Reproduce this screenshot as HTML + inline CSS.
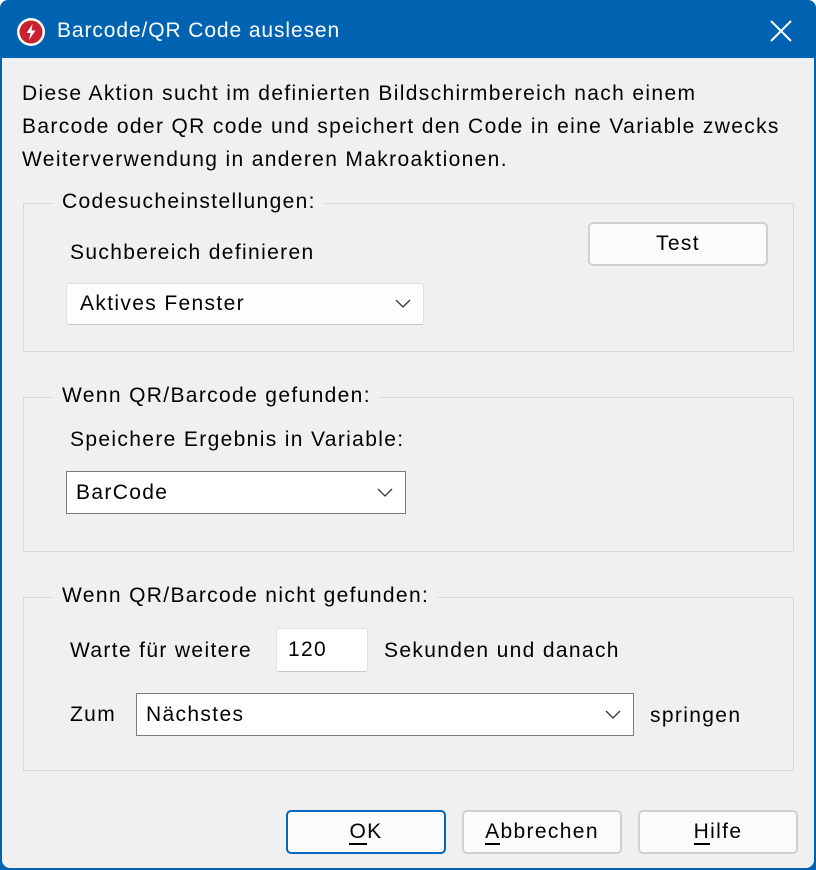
<!DOCTYPE html>
<html><head><meta charset="utf-8"><style>
*{box-sizing:border-box;margin:0;padding:0}
body{width:816px;height:870px;background:#fff;font-family:"Liberation Sans",sans-serif;font-size:21px;letter-spacing:1.35px;color:#000;position:relative;overflow:hidden}
.win{position:absolute;left:0;top:0;width:816px;height:870px;background:#0063b1;border-radius:8px 8px 0 0;}
.client{position:absolute;left:2px;top:58px;width:812px;height:810px;background:#f0f0f0;border-bottom-right-radius:8px;border-bottom-left-radius:8px}
.t{position:absolute;white-space:nowrap}
.grp{position:absolute;border:1px solid #dadada}
.leg{position:absolute;background:#f0f0f0;padding:0 8px;white-space:nowrap}
.combo{position:absolute;background:#fdfdfd;border:1px solid #e0e0e0;border-bottom-color:#c8c8c8;border-radius:3px}
.combo span{position:absolute;left:13px;top:50%;transform:translateY(-50%)}
.combo svg{position:absolute;right:12px;top:50%;margin-top:-5px}
.btn{position:absolute;background:#fbfbfb;border:2px solid #d0d0d0;border-radius:5px;text-align:center}
u{text-decoration:none;border-bottom:2px solid #000}
</style></head><body>
<div class="win">
<svg style="position:absolute;left:16px;top:17px" width="30" height="30" viewBox="0 0 30 30"><circle cx="15" cy="15" r="14" fill="#fff"/><circle cx="15" cy="15" r="11.5" fill="#c8202c"/><path d="M16.5 7 L10.5 16 H14.5 L13 23 L19.5 13.5 H15.5 Z" fill="#fff"/></svg>
<div class="t" style="left:57px;top:19px;color:#fff;font-size:21px;letter-spacing:0.9px">Barcode/QR Code auslesen</div>
<svg style="position:absolute;left:770px;top:20px" width="22" height="22" viewBox="0 0 22 22"><path d="M1 1L21 21M21 1L1 21" stroke="#fff" stroke-width="2"/></svg>
<div class="client"></div>
</div>
<div class="t" style="left:22px;top:77px;line-height:33px">Diese Aktion sucht im definierten Bildschirmbereich nach einem<br>Barcode oder QR code und speichert den Code in eine Variable zwecks<br>Weiterverwendung in anderen Makroaktionen.</div>

<div class="grp" style="left:23px;top:203px;width:771px;height:149px"></div>
<div class="leg" style="left:54px;top:190px">Codesucheinstellungen:</div>
<div class="t" style="left:70px;top:241px">Suchbereich definieren</div>
<div class="combo" style="left:66px;top:283px;width:358px;height:42px"><span>Aktives Fenster</span><svg width="16" height="10"><path d="M1 1l7 7 7-7" stroke="#333" fill="none" stroke-width="1.3"/></svg></div>
<div class="btn" style="left:588px;top:222px;width:180px;height:44px;line-height:40px">Test</div>

<div class="grp" style="left:23px;top:397px;width:771px;height:155px"></div>
<div class="leg" style="left:54px;top:384px">Wenn QR/Barcode gefunden:</div>
<div class="t" style="left:70px;top:428px">Speichere Ergebnis in Variable:</div>
<div class="combo" style="left:66px;top:471px;width:340px;height:43px;border:1px solid #7a7a7a;border-radius:0;background:#fff"><span style="left:9px">BarCode</span><svg width="16" height="10"><path d="M1 1l7 7 7-7" stroke="#333" fill="none" stroke-width="1.3"/></svg></div>

<div class="grp" style="left:23px;top:597px;width:771px;height:174px"></div>
<div class="leg" style="left:54px;top:584px">Wenn QR/Barcode nicht gefunden:</div>
<div class="t" style="left:70px;top:639px">Warte für weitere</div>
<div class="combo" style="left:276px;top:628px;width:92px;height:44px;background:#fff"><span style="left:11px">120</span></div>
<div class="t" style="left:384px;top:639px">Sekunden und danach</div>
<div class="t" style="left:70px;top:703px">Zum</div>
<div class="combo" style="left:136px;top:693px;width:498px;height:43px;border:1px solid #7a7a7a;border-radius:0;background:#fff"><span style="left:9px">Nächstes</span><svg width="16" height="10"><path d="M1 1l7 7 7-7" stroke="#333" fill="none" stroke-width="1.3"/></svg></div>
<div class="t" style="left:650px;top:704px">springen</div>

<div class="btn" style="left:286px;top:810px;width:160px;height:44px;line-height:40px;border-color:#0067c0"><u>O</u>K</div>
<div class="btn" style="left:462px;top:810px;width:160px;height:44px;line-height:40px"><u>A</u>bbrechen</div>
<div class="btn" style="left:638px;top:810px;width:160px;height:44px;line-height:40px"><u>H</u>ilfe</div>
</body></html>
